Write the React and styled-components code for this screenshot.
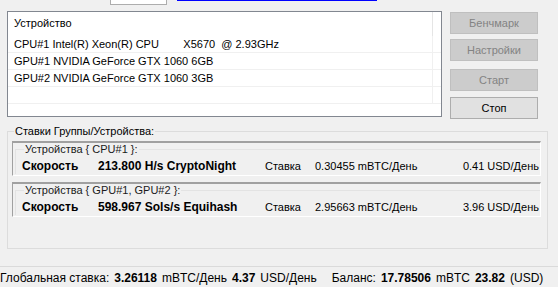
import React from 'react'
import styled, { createGlobalStyle } from 'styled-components';

const GlobalStyle = createGlobalStyle`
    html, body {
        margin: 0;
        padding: 0;
        background: #f0f0f0;
    }
    body {
        font-family: "Liberation Sans", Arial, sans-serif;
        font-size: 11px;
        color: #000;
    }
`

const devices = [
    'CPU#1 Intel(R) Xeon(R) CPU        X5670  @ 2.93GHz',
    'GPU#1 NVIDIA GeForce GTX 1060 6GB',
    'GPU#2 NVIDIA GeForce GTX 1060 3GB',
    '',
];

const groups = [
    { name: 'Устройства { CPU#1 }:', speed: '213.800 H/s CryptoNight', btc: '0.30455 mBTC/День', usd: '0.41 USD/День' },
    { name: 'Устройства { GPU#1, GPU#2 }:', speed: '598.967 Sols/s Equihash', btc: '2.95663 mBTC/День', usd: '3.96 USD/День' },
];

const App = () => {
    return (
        <Window>
            <GlobalStyle />
            <TopRow>
                <span className="label">Сервис майнинга:</span>
                <div className="box" />
                <div className="link" />
            </TopRow>
            <MainRow>
                <DeviceList>
                    <ListHeader>
                        <span>Устройство</span>
                    </ListHeader>
                    {devices.map((d, i) => (
                        <ListRow key={i}>{d}</ListRow>
                    ))}
                </DeviceList>
                <Buttons>
                    <Button disabled>Бенчмарк</Button>
                    <Button disabled $gap={5}>Настройки</Button>
                    <Button disabled $gap={8}>Старт</Button>
                    <Button $gap={6}>Стоп</Button>
                </Buttons>
            </MainRow>
            <GroupBox>
                <legend>Ставки Группы/Устройства:</legend>
                {groups.map((g) => (
                    <Panel key={g.name}>
                        <InnerGroup>
                            <legend>{g.name}</legend>
                            <SpeedRow>
                                <b className="title">Скорость</b>
                                <b className="speed">{g.speed}</b>
                                <span className="rate">Ставка</span>
                                <span className="btc">{g.btc}</span>
                                <span className="usd">{g.usd}</span>
                            </SpeedRow>
                        </InnerGroup>
                    </Panel>
                ))}
            </GroupBox>
            <StatusBar>
                <span>Глобальная ставка:</span>
                <b>3.26118</b>
                <span>mBTC/День</span>
                <b>4.37</b>
                <span>USD/День</span>
                <span className="wide">Баланс:</span>
                <b>17.78506</b>
                <span>mBTC</span>
                <b>23.82</b>
                <span>(USD)</span>
            </StatusBar>
        </Window>
    )
}

const Window = styled.div`
    width: 558px;
    height: 287px;
    overflow: hidden;
    display: flex;
    flex-direction: column;
    background: #f0f0f0;
`
const TopRow = styled.div`
    display: flex;
    align-items: flex-end;
    height: 20px;
    margin-top: -15px;
    padding-left: 10px;
    .label {
        width: 100px;
        line-height: 12px;
        margin-bottom: 5px;
        color: #333;
    }
    .box {
        width: 57px;
        height: 19px;
        background: #fff;
        border: 1px solid #adadad;
        box-sizing: border-box;
        margin-right: 10px;
    }
    .link {
        width: 200px;
        height: 1px;
        margin-bottom: 4px;
        background: #0000ff;
    }
`
const MainRow = styled.div`
    display: flex;
    align-items: flex-start;
    margin-top: 6px;
    padding-left: 7px;
`
const DeviceList = styled.div`
    width: 435px;
    height: 106px;
    box-sizing: border-box;
    border: 1px solid #828790;
    background: #fff;
    overflow: hidden;
`
const ListHeader = styled.div`
    height: 24px;
    display: flex;
    align-items: center;
    padding: 0 0 2px 6px;
    border-right: 1px solid #e5e5e5;
    width: 425px;
    box-sizing: border-box;
    font-size: 11px;
`
const ListRow = styled.div`
    height: 17px;
    line-height: 16px;
    padding-left: 6px;
    white-space: pre;
    border-bottom: 1px solid #f0f0f0;
    box-sizing: border-box;
    position: relative;
    &::after {
        content: '';
        position: absolute;
        left: 424px;
        top: 0;
        bottom: -1px;
        border-left: 1px solid #f0f0f0;
    }
`
const Buttons = styled.div`
    display: flex;
    flex-direction: column;
    margin-left: 8px;
    padding-top: 1px;
`
const Button = styled.button`
    width: 88px;
    height: 22px;
    margin-top: ${(p) => p.$gap || 0}px;
    padding: 0;
    font-family: "Liberation Sans", Arial, sans-serif;
    font-size: 11px;
    font-weight: normal;
    background: #e1e1e1;
    border: 1px solid #adadad;
    color: #000;
    &:disabled {
        background: #cccccc;
        border-color: #bfbfbf;
        color: #838383;
    }
`
const GroupBox = styled.fieldset`
    margin: 6px 10px 0 7px;
    height: 124px;
    box-sizing: border-box;
    border: 1px solid #dcdcdc;
    padding: 4px 6px 0 4px;
    legend {
        padding: 0 1px;
        margin-left: 2px;
        font-size: 11px;
        line-height: 12px;
    }
`
const Panel = styled.div`
    height: 35px;
    box-sizing: border-box;
    border-top: 2px solid #a0a0a0;
    border-left: 1px solid #a0a0a0;
    border-right: 1px solid #fff;
    border-bottom: 1px solid #fff;
    margin-bottom: 6px;
    padding: 1px 0 0 2px;
`
const InnerGroup = styled.fieldset`
    margin: -1px 0 0 0;
    padding: 0 1px 0 6px;
    border: 1px solid #e3e3e3;
    border-right: none;
    border-bottom: none;
    legend {
        padding: 0 1px;
        margin-left: 2px;
        font-size: 11px;
        line-height: 13px;
        color: #1a1a1a;
    }
`
const SpeedRow = styled.div`
    display: flex;
    align-items: center;
    height: 17px;
    margin-top: 1px;
    font-size: 11px;
    b {
        font-size: 12px;
    }
    .title {
        width: 76px;
    }
    .speed {
        width: 167px;
    }
    .rate {
        width: 50px;
    }
    .usd {
        margin-left: auto;
    }
`
const StatusBar = styled.div`
    margin-top: auto;
    height: 21px;
    box-sizing: border-box;
    padding-top: 2px;
    border-top: 1px solid #dadada;
    display: flex;
    align-items: center;
    gap: 5px;
    font-size: 12px;
    white-space: nowrap;
    .wide {
        margin-left: 10px;
    }
`

export default App;
